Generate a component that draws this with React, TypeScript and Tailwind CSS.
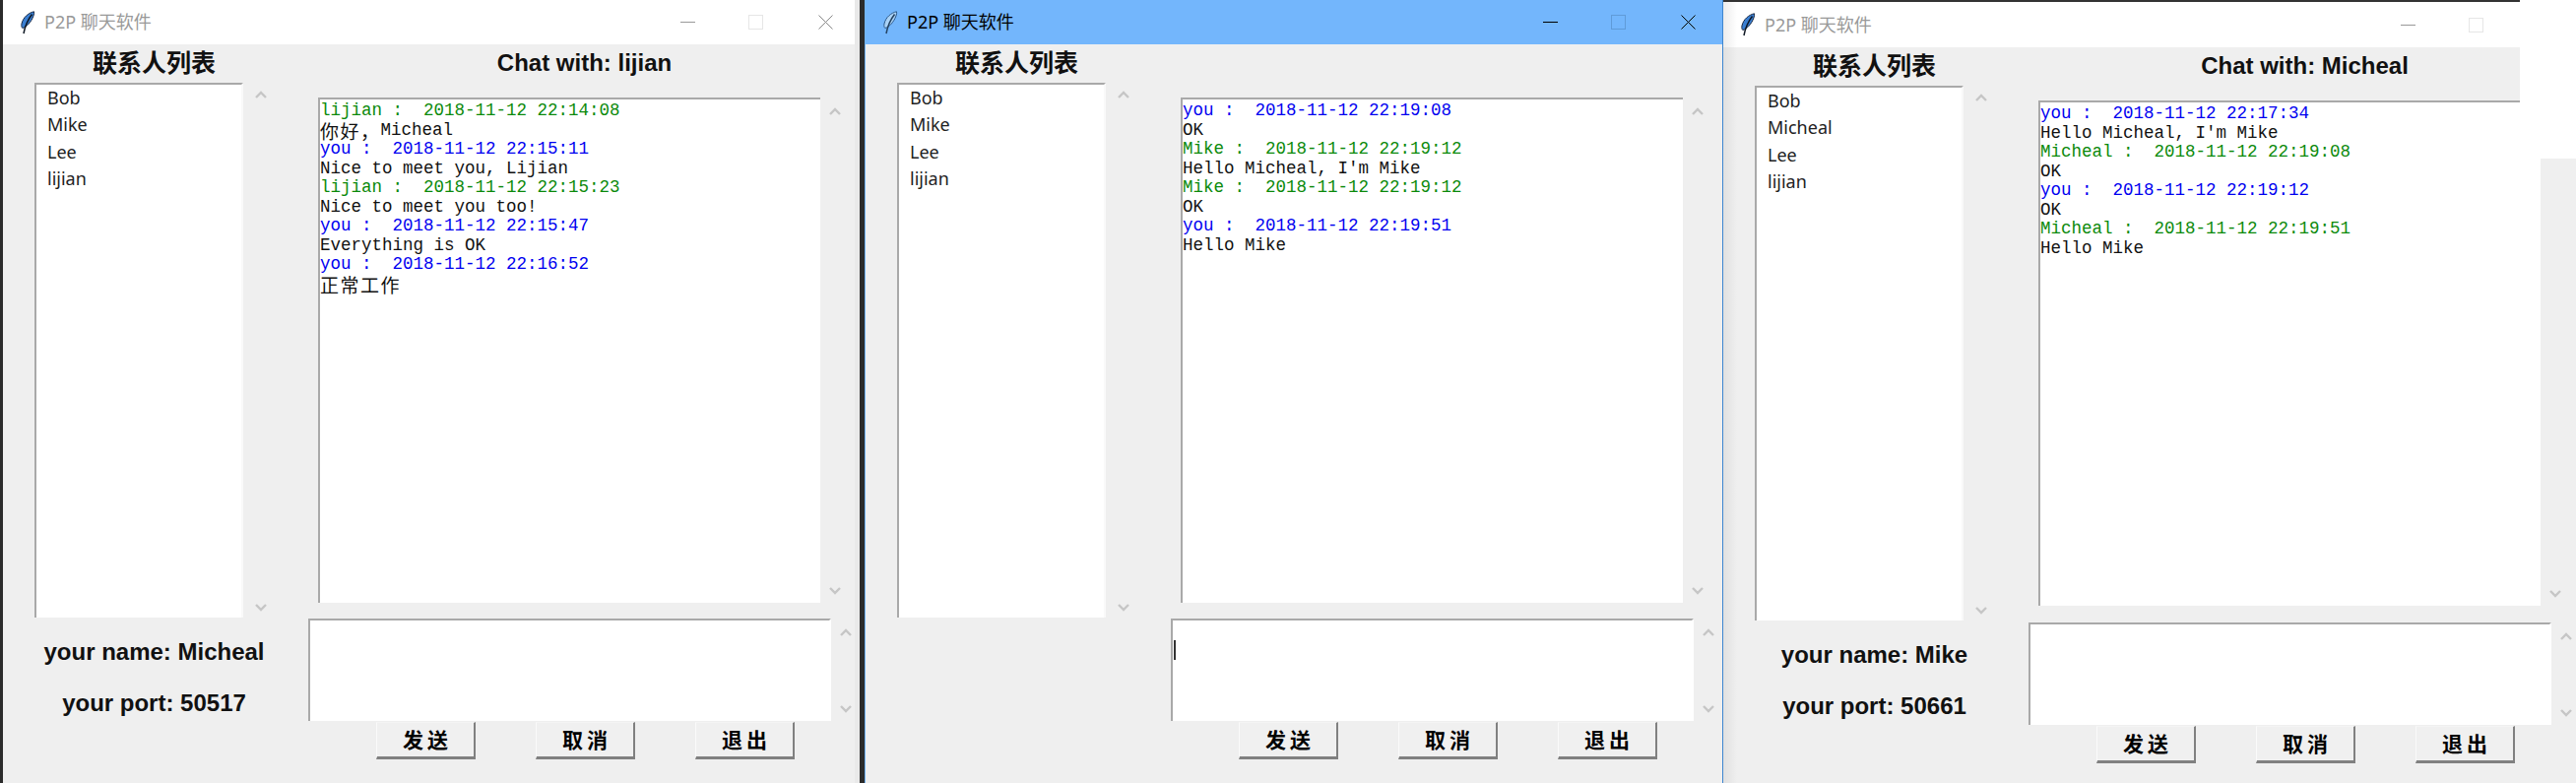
import React from "react";

const Chevron = ({ up }: { up?: boolean }) => (
  <svg width="12" height="8" viewBox="0 0 12 8" className="shrink-0">
    <polyline points={up ? "1,7 6,2 11,7" : "1,1 6,6 11,1"} fill="none" stroke="#c6c6c6" strokeWidth="2.4" />
  </svg>
);

const Feather = ({ active }: { active?: boolean }) => (
  <svg width="16" height="24" viewBox="0 0 16 24" className="shrink-0">
    <path d="M14.5 0.8 C9 2 3.5 6.5 2 13 C1.6 15 1.8 16.5 2.8 17.5 C7 16.5 12 11 14 5 C14.6 3.4 14.8 2 14.5 0.8 Z" fill={active ? "#a9d2f7" : "#3a7fd2"} stroke={active ? "#2c5a8c" : "#1b2a44"} strokeWidth="1" />
    <path d="M12.5 3.5 C9 8 5.5 15 4 23" fill="none" stroke={active ? "#24415f" : "#0d1622"} strokeWidth="1.5" />
  </svg>
);

const Who = ({ name, time, c }: { name: string; time: string; c: "g" | "b" }) => (
  <span className={c === "g" ? "text-[#0b8a0b]" : "text-[#0000f0]"}>{`${name} :  2018-11-12 ${time}`}</span>
);

const Cjk = ({ children }: { children: React.ReactNode }) => (
  <span className="inline-block h-[19.5px] text-[19px] leading-[19.5px] tracking-[1.5px] align-top [font-family:'Noto_Sans_CJK_SC',sans-serif]">{children}</span>
);

const Controls = ({ active, close = true }: { active?: boolean; close?: boolean }) => (
  <div className="flex items-center">
    <div className={`w-[15px] h-px ${active ? "bg-black" : "bg-[#999999]"}`} />
    <div className={`ml-[54px] w-[15px] h-[15px] border ${active ? "border-[#5f9bd8]" : "border-[#e6e6e6]"}`} />
    {close && (
      <svg width="15" height="15" viewBox="0 0 15 15" className="ml-[56px]">
        <path d="M0.5 0.5 L14.5 14.5 M14.5 0.5 L0.5 14.5" stroke={active ? "#000000" : "#888888"} strokeWidth="1" fill="none" />
      </svg>
    )}
  </div>
);

function Body({
  list,
  lines,
  chat,
  name,
  port,
  caret,
  late,
}: {
  list: string[];
  lines: React.ReactNode[];
  chat?: string;
  name?: string;
  port?: string;
  caret?: boolean;
  late?: boolean;
}) {
  return (
    <div className="flex">
      <div className="w-[307px] shrink-0">
        <div className="h-[39px] flex items-start justify-center pt-[3px] text-[25px] leading-[28px] font-bold text-[#111111] [font-family:'Noto_Sans_CJK_SC',sans-serif]">
          联系人列表
        </div>
        <div className="flex ml-[32px] h-[543px]">
          <div className="w-[212px] bg-white border-t-2 border-l-2 border-r-2 border-t-[#a9a9a9] border-l-[#a9a9a9] border-r-[#f9f9f9] pl-[11px] text-[18px] leading-[27.3px] text-[#222222] [font-family:'Noto_Sans',sans-serif]">
            {list.map((x) => (
              <div key={x}>{x}</div>
            ))}
          </div>
          <div className="w-[36px] flex flex-col items-center justify-between pt-[8px] pb-[6px]">
            <Chevron up />
            <Chevron />
          </div>
        </div>
        {name && (
          <div className="flex flex-col items-center pt-[21px] gap-[24px] text-[24px] leading-[28px] font-bold text-[#111111] [font-family:'Liberation_Sans',sans-serif]">
            <div>{name}</div>
            <div>{port}</div>
          </div>
        )}
      </div>
      <div className="w-[565px] shrink-0">
        <div className="h-[54px] pl-[27px] flex justify-center items-start pt-[5px] text-[24px] leading-[28px] font-bold text-[#111111] [font-family:'Liberation_Sans',sans-serif] w-[540px]">
          {chat}
        </div>
        <div className="flex ml-[13px] h-[513px]">
          <div className="w-[510px] shrink-0 bg-white border-t-2 border-l-2 border-t-[#a9a9a9] border-l-[#a9a9a9] pt-[2px] text-[17.5px] leading-[19.5px] text-[#111111] whitespace-pre [font-family:'Liberation_Mono',monospace]">
            {lines.map((l, i) => (
              <div key={i} className="h-[19.5px]">
                {l}
              </div>
            ))}
          </div>
          <div className="w-[30px] flex flex-col items-center justify-between pt-[10px] pb-[8px]">
            <Chevron up />
            <Chevron />
          </div>
        </div>
        <div className={`flex ml-[3px] h-[104px] ${late ? "mt-[17px]" : "mt-[16px]"}`}>
          <div className="w-[531px] shrink-0 bg-white border-t-2 border-l-2 border-r-2 border-t-[#a9a9a9] border-l-[#a9a9a9] border-r-white">
            {caret && <div className="mt-[20px] ml-px w-[2px] h-[20px] bg-[#333333]" />}
          </div>
          <div className="w-[30px] flex flex-col items-center justify-between pt-[10px] pb-[8px]">
            <Chevron up />
            <Chevron />
          </div>
        </div>
        <div className="flex ml-[72px] gap-[61px] mt-px">
          {["发送", "取消", "退出"].map((b) => (
            <div
              key={b}
              className="w-[101px] h-[38px] flex items-center justify-center bg-[#f0f0f0] border-l border-t border-l-[#fafafa] border-t-[#f4f4f4] border-r-2 border-b-[3px] border-r-[#808080] border-b-[#808080] text-[21px] tracking-[4px] pl-[4px] font-bold text-black [font-family:'Noto_Sans_CJK_SC',sans-serif]"
            >
              {b}
            </div>
          ))}
        </div>
      </div>
    </div>
  );
}

const lines1 = [
  <Who name="lijian" time="22:14:08" c="g" />,
  <><Cjk>你好，</Cjk>Micheal</>,
  <Who name="you" time="22:15:11" c="b" />,
  "Nice to meet you, Lijian",
  <Who name="lijian" time="22:15:23" c="g" />,
  "Nice to meet you too!",
  <Who name="you" time="22:15:47" c="b" />,
  "Everything is OK",
  <Who name="you" time="22:16:52" c="b" />,
  <Cjk>正常工作</Cjk>,
];

const lines2 = [
  <Who name="you" time="22:19:08" c="b" />,
  "OK",
  <Who name="Mike" time="22:19:12" c="g" />,
  "Hello Micheal, I'm Mike",
  <Who name="Mike" time="22:19:12" c="g" />,
  "OK",
  <Who name="you" time="22:19:51" c="b" />,
  "Hello Mike",
];

const lines3 = [
  <Who name="you" time="22:17:34" c="b" />,
  "Hello Micheal, I'm Mike",
  <Who name="Micheal" time="22:19:08" c="g" />,
  "OK",
  <Who name="you" time="22:19:12" c="b" />,
  "OK",
  <Who name="Micheal" time="22:19:51" c="g" />,
  "Hello Mike",
];

const Title = ({ active }: { active?: boolean }) => (
  <div className="w-[688px] shrink-0 flex items-center gap-[9px] pl-[17px] text-[18px] [font-family:'Noto_Sans','Noto_Sans_CJK_SC',sans-serif]">
    <Feather active={active} />
    <span className={active ? "text-black" : "text-[#999999]"}>P2P 聊天软件</span>
  </div>
);

export default function App() {
  return (
    <div className="w-[2616px] h-[795px] overflow-hidden flex bg-[#2b2b2b] pl-[3px]">
      {/* window 1 */}
      <div className="w-[870px] h-full shrink-0 bg-[#efefef] border-r-[5px] border-r-[#e9e9e9]">
        <div className="h-[45px] bg-white flex items-center">
          <Title />
          <Controls />
        </div>
        <Body
          list={["Bob", "Mike", "Lee", "lijian"]}
          lines={lines1}
          chat="Chat with: lijian"
          name="your name: Micheal"
          port="your port: 50517"
        />
      </div>
      {/* window 2 */}
      <div className="ml-[5px] w-[872px] h-full shrink-0 overflow-hidden bg-[#efefef] border-l border-r border-l-[#73b6fc] border-r-[#3d86cf]">
        <div className="h-[45px] bg-[#73b6fc] flex items-center">
          <Title active />
          <Controls active />
        </div>
        <Body list={["Bob", "Mike", "Lee", "lijian"]} lines={lines2} caret />
      </div>
      {/* window 3 */}
      <div className="relative flex-1 h-full bg-[linear-gradient(to_right,#e0e0e0,#efefef_14px)] overflow-hidden">
        <div className="h-[48px] border-t-2 border-t-[#333333] bg-[linear-gradient(to_right,#ececec,#ffffff_14px)] flex items-center">
          <Title />
          <Controls close={false} />
        </div>
        <Body
          list={["Bob", "Micheal", "Lee", "lijian"]}
          lines={lines3}
          chat="Chat with: Micheal"
          name="your name: Mike"
          port="your port: 50661"
          late
        />
        <div className="absolute top-0 left-[809px] w-[60px] h-[161px] bg-white" />
      </div>
    </div>
  );
}
